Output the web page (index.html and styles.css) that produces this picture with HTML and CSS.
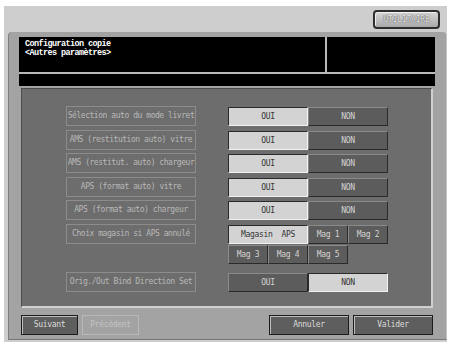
FILE: index.html
```html
<!DOCTYPE html>
<html lang="fr">
<head>
<meta charset="utf-8">
<title>Configuration copie</title>
<link rel="stylesheet" href="styles.css">
</head>
<body>
<div class="screen">
	<div class="topbar">
		<div class="util">UTILITAIRE</div>
	</div>
	<div class="frame">
		<div class="header">
			<div class="hdr-main">Configuration copie<br>&lt;Autres paramètres&gt;</div>
			<div class="hdr-side"></div>
		</div>
		<div class="msgbar"></div>
		<div class="panel">
			<div class="row">
				<div class="label">Sélection auto du mode livret</div>
				<div class="ctrl"><div class="btn on wide">OUI</div><div class="btn wide">NON</div></div>
			</div>
			<div class="row">
				<div class="label">AMS (restitution auto) vitre</div>
				<div class="ctrl"><div class="btn on wide">OUI</div><div class="btn wide">NON</div></div>
			</div>
			<div class="row">
				<div class="label">AMS (restitut. auto) chargeur</div>
				<div class="ctrl"><div class="btn on wide">OUI</div><div class="btn wide">NON</div></div>
			</div>
			<div class="row">
				<div class="label">APS (format auto) vitre</div>
				<div class="ctrl"><div class="btn on wide">OUI</div><div class="btn wide">NON</div></div>
			</div>
			<div class="row">
				<div class="label">APS (format auto) chargeur</div>
				<div class="ctrl"><div class="btn on wide">OUI</div><div class="btn wide">NON</div></div>
			</div>
			<div class="row tall">
				<div class="label">Choix magasin si APS annulé</div>
				<div class="mags">
					<div class="btn on wide">Magasin  APS</div>
					<div class="btn">Mag 1</div>
					<div class="btn">Mag 2</div>
					<div class="btn">Mag 3</div>
					<div class="btn">Mag 4</div>
					<div class="btn">Mag 5</div>
				</div>
			</div>
			<div class="row">
				<div class="label">Orig./Out Bind Direction Set</div>
				<div class="ctrl"><div class="btn wide">OUI</div><div class="btn on wide">NON</div></div>
			</div>
		</div>
		<div class="bottom">
			<div class="nav">
				<div class="key">Suivant</div>
				<div class="key off">Précédent</div>
			</div>
			<div class="nav">
				<div class="key big">Annuler</div>
				<div class="key big">Valider</div>
			</div>
		</div>
	</div>
</div>
</body>
</html>
```

FILE: styles.css
```css
body {
	margin: 0;
	background: #fff;
	font-family: "DejaVu Sans Mono", "Liberation Mono", monospace;
}
.screen {
	margin: 6px 4px 0 4px;
	height: 336px;
	background: #cecece;
}
.topbar {
	height: 26px;
	display: flex;
	justify-content: flex-end;
	padding-right: 7px;
	box-sizing: border-box;
	padding-top: 4px;
}
.util {
	width: 67px;
	height: 19px;
	box-sizing: border-box;
	border: 2px solid #2e2e2e;
	border-radius: 4px;
	background: linear-gradient(#d6d6d6, #a9a9a9);
	box-shadow: inset 1px 1px 0 #eee;
	color: #e8e8e8;
	font-size: 8px;
	line-height: 15px;
	text-align: center;
	letter-spacing: -0.2px;
	text-shadow: 0 0 1px #555, 0 0 1px #555;
}
.frame {
	margin-left: 4px;
	height: 308px;
	box-sizing: border-box;
	background: #a3a3a3;
	border-radius: 4px 4px 0 0;
	border-left: 1px solid #7c7c7c;
	border-right: 1px solid #c4c4c4;
	border-bottom: 1px solid #777;
	padding: 5px 11px 0 10px;
}
.header {
	display: flex;
	height: 35px;
	border-bottom: 2px solid #b9b9b9;
}
.hdr-main {
	flex: 1;
	background: #000;
	color: #fff;
	border-right: 2px solid #b9b9b9;
	padding: 3px 6px;
	font-family: "Liberation Mono", monospace;
	font-weight: bold;
	font-size: 8.5px;
	letter-spacing: -0.6px;
	line-height: 8.5px;
}
.hdr-side {
	width: 108px;
	background: #000;
}
.msgbar {
	height: 12px;
	background: #000;
}
.panel {
	margin: 2px 2px 0 2px;
	height: 220px;
	box-sizing: border-box;
	background: #6d6d6d;
	border-top: 1px solid #4c4c4c;
	border-left: 1px solid #4c4c4c;
	border-right: 2px solid #cfcfcf;
	border-bottom: 2px solid #cfcfcf;
	padding: 17px 0 0 44px;
}
.row {
	display: flex;
	gap: 32px;
	height: 20px;
	margin-bottom: 3.5px;
}
.row.tall {
	height: 40px;
	margin-bottom: 8px;
}
.label {
	width: 130px;
	height: 20px;
	box-sizing: border-box;
	border: 1px solid #8c8c8c;
	color: #b9b9b9;
	font-size: 8px;
	letter-spacing: -0.45px;
	line-height: 18px;
	text-align: center;
	white-space: nowrap;
	overflow: hidden;
}
.ctrl {
	display: flex;
	padding-top: 1px;
}
.mags {
	display: grid;
	grid-template-columns: repeat(4, 40px);
	grid-auto-rows: 19px;
	row-gap: 1px;
	padding-top: 1px;
}
.btn {
	width: 40px;
	height: 19px;
	box-sizing: border-box;
	background: #5c5c5c;
	border: 1px solid;
	border-color: #8a8a8a #2a2a2a #2a2a2a #8a8a8a;
	color: #d4d4d4;
	font-size: 8px;
	letter-spacing: -0.3px;
	line-height: 17px;
	text-align: center;
	white-space: pre;
}
.btn.wide {
	width: 80px;
	grid-column: span 2;
}
.btn.on {
	background: #d3d3d3;
	border-color: #2a2a2a #f2f2f2 #f2f2f2 #2a2a2a;
	color: #333;
}
.bottom {
	display: flex;
	justify-content: space-between;
	padding: 7px 2px 0 2px;
}
.nav {
	display: flex;
	gap: 4px;
}
.key {
	width: 57px;
	height: 20px;
	box-sizing: border-box;
	background: #5e5e5e;
	border: 1px solid #1c1c1c;
	box-shadow: inset 1px 1px 0 #bdbdbd;
	color: #dcdcdc;
	font-size: 8px;
	letter-spacing: -0.3px;
	line-height: 18px;
	text-align: center;
}
.key.big {
	width: 80px;
}
.key.off {
	background: #a3a3a3;
	border-color: #b8b8b8;
	box-shadow: none;
	color: #c4c4c4;
}
```
